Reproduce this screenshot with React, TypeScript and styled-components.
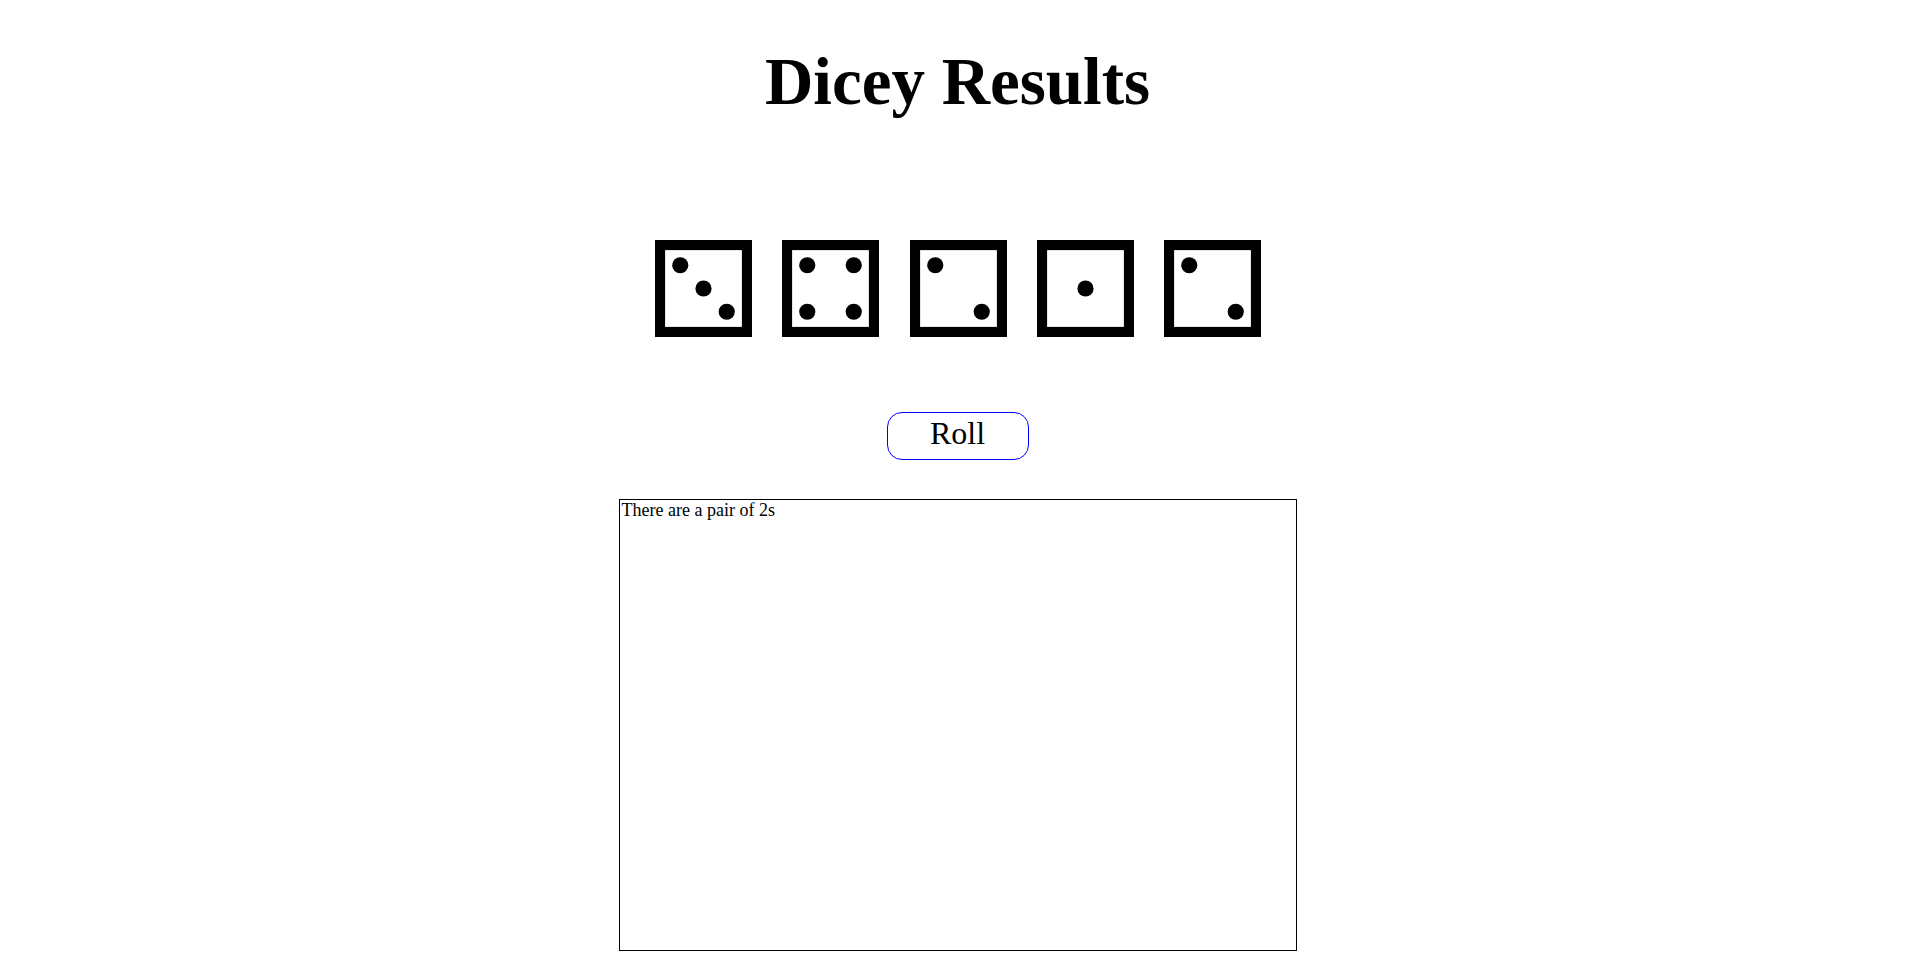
import React from "react";
import styled, { createGlobalStyle } from "styled-components";

const Global = createGlobalStyle`
  html, body { margin: 0; padding: 0; background: #fff; }
  body { font-family: "Liberation Serif", "Times New Roman", serif; color: #000; }
`;

const Page = styled.main`
  display: flex;
  flex-direction: column;
  align-items: center;
  padding-top: 43px;
`;

const Title = styled.h1`
  margin: 0;
  font-family: "Liberation Serif", "Times New Roman", serif;
  font-weight: 700;
  font-size: 67px;
  line-height: 77px;
`;

const DiceRow = styled.div`
  display: flex;
  gap: 30.25px;
  margin-top: 120px;
  padding-left: 1px;
`;

const DieFace = styled.svg`
  display: block;
  width: 97px;
  height: 97px;
`;

const RollButton = styled.button`
  margin-top: 75px;
  box-sizing: border-box;
  width: 142px;
  height: 48px;
  display: flex;
  align-items: center;
  justify-content: center;
  padding: 0 0 6px;
  background: #fff;
  border: 1px solid #0000ff;
  border-radius: 15px;
  font-family: "Liberation Serif", "Times New Roman", serif;
  font-size: 32px;
  color: #000;
  cursor: pointer;
`;

const Output = styled.textarea`
  margin-top: 39px;
  box-sizing: border-box;
  width: 678px;
  height: 452px;
  border: 1px solid #000;
  padding: 0 2px;
  resize: none;
  outline: none;
  font-family: "Liberation Serif", "Times New Roman", serif;
  font-size: 18px;
  color: #000;
  background: #fff;
`;

const PIPS: Record<number, [number, number][]> = {
  1: [[48, 48]],
  2: [[25, 25], [71, 71]],
  3: [[25, 25], [48, 48], [71, 71]],
  4: [[25, 25], [71, 25], [25, 71], [71, 71]],
  5: [[25, 25], [71, 25], [48, 48], [25, 71], [71, 71]],
  6: [[25, 25], [71, 25], [25, 48], [71, 48], [25, 71], [71, 71]],
};

const Die: React.FC<{ value: number }> = ({ value }) => (
  <DieFace viewBox="0 0 96 96">
    <rect x="5" y="5" width="86" height="86" fill="#fff" stroke="#000" strokeWidth="10" />
    {PIPS[value].map(([cx, cy], i) => (
      <circle key={i} cx={cx} cy={cy} r="8" fill="#000" />
    ))}
  </DieFace>
);

export default function App() {
  const values = [3, 4, 2, 1, 2];
  return (
    <>
      <Global />
      <Page>
        <Title>Dicey Results</Title>
        <DiceRow>
          {values.map((v, i) => (
            <Die key={i} value={v} />
          ))}
        </DiceRow>
        <RollButton>Roll</RollButton>
        <Output readOnly value="There are a pair of 2s" />
      </Page>
    </>
  );
}
